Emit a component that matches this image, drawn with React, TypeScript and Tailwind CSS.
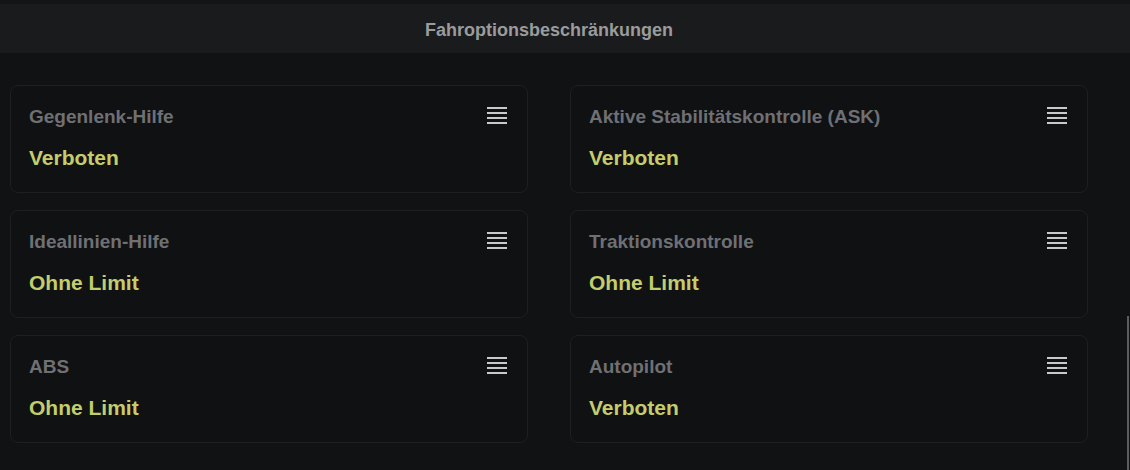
const items = [
  { label: 'Gegenlenk-Hilfe', value: 'Verboten' },
  { label: 'Aktive Stabilitätskontrolle (ASK)', value: 'Verboten' },
  { label: 'Ideallinien-Hilfe', value: 'Ohne Limit' },
  { label: 'Traktionskontrolle', value: 'Ohne Limit' },
  { label: 'ABS', value: 'Ohne Limit' },
  { label: 'Autopilot', value: 'Verboten' },
]

function ListIcon() {
  return (
    <svg width="20" height="18" viewBox="0 0 20 18">
      {[1, 6, 11, 16].map((y) => (
        <rect key={y} x="0" y={y} width="20" height="2" fill="#c9c9c9" />
      ))}
    </svg>
  )
}

export default function App() {
  return (
    <div
      className="relative h-[470px] w-[1130px] overflow-hidden bg-[#111214]"
      style={{ fontFamily: '"Liberation Sans", Arial, sans-serif' }}
    >
      <div className="h-[4px] bg-[#131416]" />
      <div className="flex h-[49px] items-center justify-center bg-[#1a1b1d] pt-[3px] pr-[32px]">
        <span className="text-[18px] font-bold text-[#9b9b9c]">Fahroptionsbeschränkungen</span>
      </div>
      <div className="grid grid-cols-2 gap-x-[42px] gap-y-[17px] pt-[32px] pl-[10px] pr-[42px]">
        {items.map((it) => (
          <div
            key={it.label}
            className="h-[108px] rounded-[8px] border border-[#1e1f21] bg-[#101113] pl-[18px] pr-[20px] pt-[20px]"
          >
            <div className="flex items-start justify-between">
              <span className="text-[19px] leading-[22px] font-bold text-[#6f7073]">{it.label}</span>
              <ListIcon />
            </div>
            <div className="mt-[18px] text-[21px] leading-[24px] font-bold text-[#c4cd6b]">{it.value}</div>
          </div>
        ))}
      </div>
      <div className="absolute right-[1px] top-[316px] h-[154px] w-[2px] bg-[#5c5c5e]" />
    </div>
  )
}
